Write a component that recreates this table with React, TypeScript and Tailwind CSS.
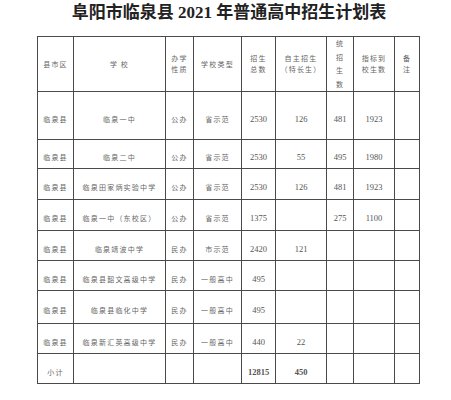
const cjk = '"Noto Sans CJK SC", sans-serif'
const serif = '"Liberation Serif", "Noto Sans CJK SC", serif'

type Row = {
  h: string
  county: string
  school: string
  kind: string
  type: string
  total: string
  self: string
  unified: string
  quota: string
  bold?: boolean
}

const rows: Row[] = [
  { h: 'h-[48px]', county: '临泉县', school: '临泉一中', kind: '公办', type: '省示范', total: '2530', self: '126', unified: '481', quota: '1923' },
  { h: 'h-[29px]', county: '临泉县', school: '临泉二中', kind: '公办', type: '省示范', total: '2530', self: '55', unified: '495', quota: '1980' },
  { h: 'h-[31px]', county: '临泉县', school: '临泉田家炳实验中学', kind: '公办', type: '省示范', total: '2530', self: '126', unified: '481', quota: '1923' },
  { h: 'h-[31px]', county: '临泉县', school: '临泉一中（东校区）', kind: '公办', type: '省示范', total: '1375', self: '', unified: '275', quota: '1100' },
  { h: 'h-[30px]', county: '临泉县', school: '临泉靖波中学', kind: '民办', type: '市示范', total: '2420', self: '121', unified: '', quota: '' },
  { h: 'h-[30px]', county: '临泉县', school: '临泉县韶文高级中学', kind: '民办', type: '一般高中', total: '495', self: '', unified: '', quota: '' },
  { h: 'h-[33px]', county: '临泉县', school: '临泉县临化中学', kind: '民办', type: '一般高中', total: '495', self: '', unified: '', quota: '' },
  { h: 'h-[30px]', county: '临泉县', school: '临泉新汇英高级中学', kind: '民办', type: '一般高中', total: '440', self: '22', unified: '', quota: '' },
  { h: 'h-[30px]', county: '小计', school: '', kind: '', type: '', total: '12815', self: '450', unified: '', quota: '', bold: true },
]

const cell = 'border border-[#4a4a4a] p-0 text-center align-middle'
const zh = 'text-[7px] tracking-[1.2px] text-[#666]'
const num = 'text-[8.5px] text-[#555]'

function Zh({ children }: { children: React.ReactNode }) {
  return <span className={zh} style={{ fontFamily: cjk }}>{children}</span>
}

function Num({ children, bold }: { children: React.ReactNode; bold?: boolean }) {
  return (
    <span className={`${num} ${bold ? 'font-bold text-[#333]' : ''}`} style={{ fontFamily: serif }}>
      {children}
    </span>
  )
}

function Head({ lines, lh }: { lines: string[]; lh?: string }) {
  return (
    <div className={`flex flex-col items-center ${lh ?? 'leading-[11px]'}`}>
      {lines.map(l => <Zh key={l}>{l}</Zh>)}
    </div>
  )
}

export default function App() {
  return (
    <div className="w-[451px] h-[400px] bg-white overflow-hidden">
      {/* Title */}
      <h1
        className="h-[26px] pl-[7px] text-center text-[17px] font-bold leading-[26px] text-[#222]"
        style={{ fontFamily: serif }}
      >
        阜阳市临泉县 2021 年普通高中招生计划表
      </h1>

      {/* Table */}
      <table className="ml-[37px] mt-[10px] w-[382px] table-fixed border-collapse">
        <colgroup>
          <col className="w-[36px]" />
          <col className="w-[92px]" />
          <col className="w-[28px]" />
          <col className="w-[48px]" />
          <col className="w-[34px]" />
          <col className="w-[51px]" />
          <col className="w-[27px]" />
          <col className="w-[41px]" />
          <col className="w-[25px]" />
        </colgroup>
        <thead>
          <tr className="h-[54px]">
            <th className={cell + ' font-normal'}><Head lines={['县市区']} /></th>
            <th className={cell + ' font-normal'}><Head lines={['学 校']} /></th>
            <th className={cell + ' font-normal'}><Head lines={['办学', '性质']} /></th>
            <th className={cell + ' font-normal'}><Head lines={['学校类型']} /></th>
            <th className={cell + ' font-normal'}><Head lines={['招生', '总数']} /></th>
            <th className={cell + ' font-normal'}><Head lines={['自主招生', '（特长生）']} /></th>
            <th className={cell + ' font-normal'}><Head lines={['统', '招', '生', '数']} lh="leading-[13.5px]" /></th>
            <th className={cell + ' font-normal'}><Head lines={['指标到', '校生数']} /></th>
            <th className={cell + ' font-normal'}><Head lines={['备', '注']} /></th>
          </tr>
        </thead>
        <tbody>
          {rows.map((r, i) => (
            <tr key={i} className={r.h}>
              <td className={cell}><Zh>{r.county}</Zh></td>
              <td className={cell}><Zh>{r.school}</Zh></td>
              <td className={cell}><Zh>{r.kind}</Zh></td>
              <td className={cell}><Zh>{r.type}</Zh></td>
              <td className={cell}><Num bold={r.bold}>{r.total}</Num></td>
              <td className={cell}><Num bold={r.bold}>{r.self}</Num></td>
              <td className={cell}><Num>{r.unified}</Num></td>
              <td className={cell}><Num>{r.quota}</Num></td>
              <td className={cell}></td>
            </tr>
          ))}
        </tbody>
      </table>
    </div>
  )
}
